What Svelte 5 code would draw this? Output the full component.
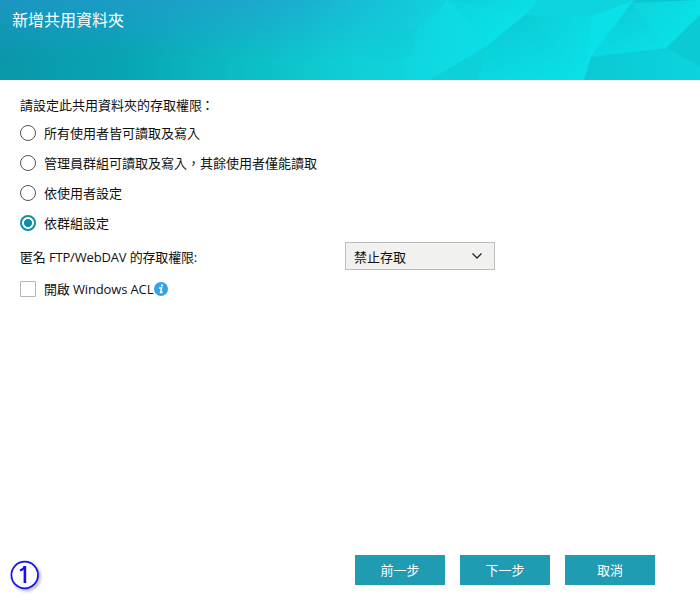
<script lang="ts">
	type Option = {
		value: string;
		label: string;
	};

	const options: Option[] = [
		{ value: "all", label: "所有使用者皆可讀取及寫入" },
		{ value: "admins", label: "管理員群組可讀取及寫入，其餘使用者僅能讀取" },
		{ value: "user", label: "依使用者設定" },
		{ value: "group", label: "依群組設定" }
	];

	const buttons = ["前一步", "下一步", "取消"];

	let permission = $state("group");
	let acl = $state(false);
</script>

<div class="wizard">
	<header>
		<svg class="facets" width="700" height="80" viewBox="0 0 700 80">
			<defs>
				<linearGradient id="base" x1="0" x2="1" y1="0" y2="0">
					<stop offset="0" stop-color="#0a97aa" />
					<stop offset="0.17" stop-color="#08a4b4" />
					<stop offset="0.34" stop-color="#0cbcc4" />
					<stop offset="0.5" stop-color="#10ced6" />
					<stop offset="0.64" stop-color="#10d7df" />
					<stop offset="1" stop-color="#0cdbe2" />
				</linearGradient>
				<linearGradient id="sky" x1="0" x2="0" y1="0" y2="1">
					<stop offset="0" stop-color="#2896d2" stop-opacity="0.75" />
					<stop offset="0.75" stop-color="#2896d2" stop-opacity="0" />
				</linearGradient>
				<linearGradient id="fade" x1="0" x2="1" y1="0" y2="0">
					<stop offset="0" stop-color="#ccc" />
					<stop offset="0.36" stop-color="#ccc" />
					<stop offset="0.68" stop-color="#000" />
				</linearGradient>
				<mask id="skyMask">
					<rect width="700" height="80" fill="url(#fade)" />
				</mask>
				<linearGradient id="down" x1="0" x2="0.7" y1="0" y2="1">
					<stop offset="0" stop-color="#0cc8d2" />
					<stop offset="1" stop-color="#0adfe6" />
				</linearGradient>
				<linearGradient id="right" x1="0" x2="1" y1="0" y2="0.3">
					<stop offset="0" stop-color="#0cced7" />
					<stop offset="1" stop-color="#0ae0e7" />
				</linearGradient>
				<linearGradient id="bright" x1="0" x2="1" y1="0" y2="0.6">
					<stop offset="0" stop-color="#0ed3db" />
					<stop offset="1" stop-color="#08e3e9" />
				</linearGradient>
				<linearGradient id="corner" x1="0" x2="1" y1="0" y2="0">
					<stop offset="0" stop-color="#0bc9d3" />
					<stop offset="1" stop-color="#0bd4dd" />
				</linearGradient>
				<linearGradient id="open" gradientUnits="userSpaceOnUse" x1="390" x2="485" y1="0" y2="0">
					<stop offset="0" stop-color="#0cdfe6" stop-opacity="0" />
					<stop offset="1" stop-color="#0cdfe6" stop-opacity="0.9" />
				</linearGradient>
			</defs>
			<rect width="700" height="80" fill="url(#base)" />
			<rect width="700" height="80" fill="url(#sky)" mask="url(#skyMask)" />
			<path d="M448 0L417 28L412 55L360 72V80H430L460 63L488 45Z" fill="url(#open)" />
			<path d="M417 28L380 33L360 72L412 55Z" fill="#0bcbd4" opacity="0.18" />
			<path d="M448 0H538L525 15Z" fill="url(#right)" />
			<path d="M448 0L525 15L488 45Z" fill="url(#bright)" />
			<path d="M430 80L488 45L478 80Z" fill="#0dd0d9" />
			<path d="M525 15L592 16L591 57L584 80H478L488 45Z" fill="url(#down)" />
			<path d="M525 15L592 16L591 57L584 72Z" fill="url(#right)" opacity="0.6" />
			<path d="M538 0H634L592 16L525 15Z" fill="#0cd5de" />
			<path d="M592 16L634 0L591 57L584 80Z" fill="#09e0e7" />
			<path d="M632 3L666 48L591 57Z" fill="url(#down)" />
			<path d="M632 3L666 48L700 15V0H634Z" fill="url(#bright)" />
			<path d="M632 3L700 0H634Z" fill="#0ac8d2" />
			<path d="M700 15L666 48L700 67Z" fill="#0bcad4" />
			<path d="M591 57L666 48L700 67V80H584Z" fill="url(#corner)" />
		</svg>
		<h1>新增共用資料夾</h1>
	</header>

	<main>
		<p>請設定此共用資料夾的存取權限<span class="colon">：</span></p>
		{#each options as option}
			<label class="option">
				<input type="radio" name="permission" value={option.value} bind:group={permission} />
				<span>{option.label}</span>
			</label>
		{/each}

		<div class="anonymous">
			<span class="caption">匿名 FTP/WebDAV 的存取權限:</span>
			<button class="select">
				<span>禁止存取</span>
				<svg width="12" height="8" viewBox="0 0 12 8">
					<path d="M1.5 1.5L6 6L10.5 1.5" fill="none" stroke="#222" stroke-width="1.3" />
				</svg>
			</button>
		</div>

		<label class="acl">
			<input type="checkbox" bind:checked={acl} />
			<span class="latin">開啟 Windows ACL</span>
			<svg width="14" height="14" viewBox="0 0 14 14">
				<circle cx="7" cy="7" r="7" fill="#34a2e4" />
				<circle cx="8" cy="3.4" r="1.1" fill="#fff" />
				<path d="M5.1 6H7.7L6.4 10.3Q6.4 11.1 8.6 10" fill="none" stroke="#fff" stroke-width="1.4" />
			</svg>
		</label>
	</main>

	<footer>
		<svg class="step" width="36" height="36" viewBox="0 0 36 36">
			<circle cx="16.7" cy="17" r="13.3" fill="#fff" stroke="#1010f0" stroke-width="1.7" />
			<path d="M12 12.4Q15.6 11.6 16.5 8.4" fill="none" stroke="#1010f0" stroke-width="2" />
			<path d="M16.9 8V25" fill="none" stroke="#1010f0" stroke-width="2.6" />
		</svg>
		<div class="actions">
			{#each buttons as button}
				<button>{button}</button>
			{/each}
		</div>
	</footer>
</div>

<style>
	:global(body) {
		margin: 0;
		background: #fff;
	}

	.wizard {
		display: flex;
		flex-direction: column;
		width: 700px;
		height: 600px;
		overflow: hidden;
		color: #111;
		font-family: "Open Sans", "Noto Sans CJK TC", sans-serif;
		font-size: 13px;
		line-height: 20px;
	}

	header {
		position: relative;
		height: 80px;
		flex: none;
	}

	.facets {
		position: absolute;
		inset: 0;
	}

	h1 {
		position: relative;
		margin: 0;
		padding: 8px 12px;
		color: #fff;
		font-size: 16px;
		font-weight: 400;
		line-height: 24px;
	}

	main {
		flex: 1;
		padding: 15px 20px 0;
	}

	p {
		margin: 0 0 3px;
	}

	.colon {
		margin-left: -1px;
	}

	.option,
	.acl {
		display: flex;
		align-items: center;
		height: 30px;
	}

	input {
		appearance: none;
		box-sizing: border-box;
		width: 16px;
		height: 16px;
		margin: 0 8px 0 0;
		background: #fff;
		border: 1px solid #555;
		flex: none;
	}

	input[type="radio"] {
		border-radius: 50%;
	}

	input[type="radio"]:checked {
		border: 2px solid #0e8fa8;
		background: radial-gradient(circle, #0e8fa8 3.7px, #fff 4.3px);
	}

	input[type="checkbox"] {
		border-color: #b5b5b5;
		border-radius: 1px;
	}

	.anonymous {
		display: flex;
		align-items: center;
		height: 28px;
		margin: 4px 0;
	}

	.caption {
		width: 325px;
		padding-top: 1px;
		letter-spacing: -0.16px;
	}

	.latin {
		letter-spacing: -0.14px;
	}

	button {
		font: inherit;
	}

	.select {
		display: flex;
		align-items: center;
		justify-content: space-between;
		box-sizing: border-box;
		width: 150px;
		height: 28px;
		padding: 2px 11px 0 8px;
		color: #111;
		background: #f1f2f0;
		border: 1px solid #b9bcba;
	}

	.select svg {
		margin-bottom: 2px;
	}

	.acl svg {
		margin-left: 1px;
	}

	footer {
		display: flex;
		justify-content: space-between;
		height: 45px;
		padding: 0 45px 0 8px;
	}

	.step {
		margin-top: 3px;
		filter: drop-shadow(2px 2px 1.5px #bbb);
	}

	.actions {
		display: flex;
		gap: 15px;
	}

	.actions button {
		width: 90px;
		height: 30px;
		padding: 0;
		color: #fff;
		background: #209cb2;
		border: 0;
	}
</style>
